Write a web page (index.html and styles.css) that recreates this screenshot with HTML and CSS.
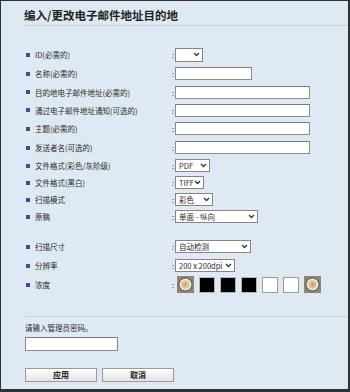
FILE: index.html
```html
<!DOCTYPE html>
<html>
<head>
  <meta charset="utf-8">
  <link rel="stylesheet" href="styles.css">
</head>
<body>
  <div class="frame">
    <h1 class="title">编入/更改电子邮件地址目的地</h1>
    <div class="rule"></div>

    <div class="form">
      <div class="row tall">
        <span class="label">ID(必需的)</span><span class="colon">:</span>
        <span class="select w-id"><span class="val"></span><svg class="chev" viewBox="0 0 7 5"><path d="M1 1l2.5 2.5L6 1"/></svg></span>
      </div>
      <div class="row tall">
        <span class="label">名称(必需的)</span><span class="colon">:</span>
        <span class="input w-short"></span>
      </div>
      <div class="row">
        <span class="label">目的地电子邮件地址(必需的)</span><span class="colon">:</span>
        <span class="input w-long"></span>
      </div>
      <div class="row">
        <span class="label">通过电子邮件地址通知(可选的)</span><span class="colon">:</span>
        <span class="input w-long"></span>
      </div>
      <div class="row tall">
        <span class="label">主题(必需的)</span><span class="colon">:</span>
        <span class="input w-long"></span>
      </div>
      <div class="row tall">
        <span class="label">发送者名(可选的)</span><span class="colon">:</span>
        <span class="input w-long"></span>
      </div>
      <div class="row short">
        <span class="label">文件格式(彩色/灰阶级)</span><span class="colon">:</span>
        <span class="select w-pdf"><span class="val">PDF</span><svg class="chev" viewBox="0 0 7 5"><path d="M1 1l2.5 2.5L6 1"/></svg></span>
      </div>
      <div class="row short">
        <span class="label">文件格式(黑白)</span><span class="colon">:</span>
        <span class="select w-tiff"><span class="val">TIFF</span><svg class="chev" viewBox="0 0 7 5"><path d="M1 1l2.5 2.5L6 1"/></svg></span>
      </div>
      <div class="row short">
        <span class="label">扫描模式</span><span class="colon">:</span>
        <span class="select w-mode"><span class="val">彩色</span><svg class="chev" viewBox="0 0 7 5"><path d="M1 1l2.5 2.5L6 1"/></svg></span>
      </div>
      <div class="row short gap-after">
        <span class="label">原稿</span><span class="colon">:</span>
        <span class="select w-orig"><span class="val">单面 - 纵向</span><svg class="chev" viewBox="0 0 7 5"><path d="M1 1l2.5 2.5L6 1"/></svg></span>
      </div>
      <div class="row short">
        <span class="label">扫描尺寸</span><span class="colon">:</span>
        <span class="select w-size"><span class="val">自动检测</span><svg class="chev" viewBox="0 0 7 5"><path d="M1 1l2.5 2.5L6 1"/></svg></span>
      </div>
      <div class="row res">
        <span class="label">分辨率</span><span class="colon">:</span>
        <span class="select w-dpi"><span class="val">200 x 200dpi</span><svg class="chev" viewBox="0 0 7 5"><path d="M1 1l2.5 2.5L6 1"/></svg></span>
      </div>
      <div class="row density">
        <span class="label">浓度</span><span class="colon">:</span>
        <div class="levels">
          <svg class="arrow" viewBox="0 0 17 17"><rect width="17" height="17" fill="#8e8574"/><circle cx="8.5" cy="8.5" r="6.5" fill="#efe9de" stroke="#5b5446" stroke-width="1"/><circle cx="8.5" cy="8.5" r="4.3" fill="#cfc6b4"/><path d="M5.5 8.5l4-2.8v5.6z" fill="#f0a21c"/></svg>
          <span class="box dark"></span>
          <span class="box dark"></span>
          <span class="box dark"></span>
          <span class="box"></span>
          <span class="box"></span>
          <svg class="arrow" viewBox="0 0 17 17"><rect width="17" height="17" fill="#8e8574"/><circle cx="8.5" cy="8.5" r="6.5" fill="#efe9de" stroke="#5b5446" stroke-width="1"/><circle cx="8.5" cy="8.5" r="4.3" fill="#cfc6b4"/><path d="M11.5 8.5l-4-2.8v5.6z" fill="#f0a21c"/></svg>
        </div>
      </div>
    </div>

    <div class="rule lower"></div>

    <div class="admin">
      <p class="prompt">请输入管理员密码。</p>
      <span class="input w-pass"></span>
      <div class="buttons">
        <button class="btn">应用</button>
        <button class="btn">取消</button>
      </div>
    </div>
  </div>
</body>
</html>
```

FILE: styles.css
```css
body {
  margin: 0;
  padding: 0;
  background: #dfe9f3;
  font-family: "Noto Sans CJK SC", "Liberation Sans", sans-serif;
  color: #2a2a2a;
}

.frame {
  width: 350px;
  height: 392px;
  box-sizing: border-box;
  border: 1px solid #2c3136;
  border-right-width: 2px;
  border-bottom-width: 3px;
  background: #dfe9f3;
  overflow: hidden;
}

.title {
  margin: 6px 0 0 23px;
  font-size: 11.5px;
  line-height: 16px;
  font-weight: bold;
  color: #222;
}

.rule {
  height: 1px;
  background: #c6d3df;
  margin: 2px 0 0 23px;
}

.rule.lower {
  margin: 23px 0 0 24px;
}

/* form rows */
.form {
  margin: 19px 0 0 25px;
}

.row {
  display: flex;
  align-items: center;
  height: 18px;
  font-size: 7.5px;
}

.row.tall { height: 19px; }
.row.short { height: 17px; }
.row.res { height: 21px; }
.row.density { height: 17px; }
.row.gap-after { margin-bottom: 13px; }

.label {
  width: 137px;
  padding-left: 9px;
  position: relative;
  white-space: nowrap;
}

.label::before {
  content: "";
  position: absolute;
  left: 0;
  top: 50%;
  width: 4px;
  height: 4px;
  margin-top: -2px;
  background: #2f5592;
}

.colon {
  width: 3px;
  color: #333;
}

.input {
  display: block;
  height: 13px;
  box-sizing: border-box;
  background: #fff;
  border: 1px solid #8c8c8c;
  border-top-color: #7a7a7a;
}

.w-short { width: 77px; }
.w-long { width: 135px; }
.w-pass { width: 93px; height: 14px; }

.select {
  display: flex;
  align-items: center;
  justify-content: space-between;
  height: 13px;
  box-sizing: border-box;
  background: #fff;
  border: 1px solid #858585;
  padding: 0 2px 0 3px;
  white-space: nowrap;
}

.select .val {
  line-height: 11px;
}

.chev {
  width: 7px;
  height: 5px;
  fill: none;
  stroke: #333;
  stroke-width: 1.3;
}

.w-id { width: 28px; height: 14px; }
.w-pdf { width: 35px; }
.w-tiff { width: 29px; }
.w-mode { width: 38px; }
.w-orig { width: 83px; }
.w-size { width: 76px; }
.w-dpi { width: 60px; }

/* density scale */
.levels {
  display: flex;
  align-items: center;
  gap: 5px;
  margin-left: 2px;
}

.arrow {
  width: 17px;
  height: 17px;
  display: block;
}

.box {
  width: 16px;
  height: 16px;
  box-sizing: border-box;
  background: #fff;
  border: 1px solid #9a9a9a;
}

.box.dark {
  background: #000;
  border-color: #b4b4b4;
}

/* admin password */
.admin {
  margin-left: 24px;
}

.prompt {
  margin: 6px 0 0;
  font-size: 7.5px;
  line-height: 10px;
}

.admin .input {
  margin-top: 4px;
}

.buttons {
  display: flex;
  gap: 5px;
  margin-top: 17px;
}

.btn {
  width: 72px;
  height: 14px;
  padding: 0;
  font-family: inherit;
  font-size: 8px;
  font-weight: bold;
  line-height: 12px;
  color: #222;
  border: 1px solid #9a9a9a;
  background: linear-gradient(#ffffff, #e4e4e4);
}
```
